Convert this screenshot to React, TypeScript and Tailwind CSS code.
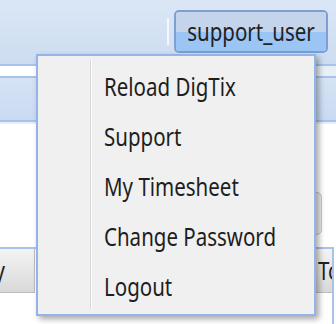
const font = { fontFamily: '"Noto Sans", "Open Sans", sans-serif' };

const items = ["Reload DigTix", "Support", "My Timesheet", "Change Password", "Logout"];

export default function App() {
  return (
    <div className="relative w-[336px] h-[324px] overflow-hidden bg-white" style={font}>
      {/* header */}
      <div className="h-[64px] bg-gradient-to-b from-[#dbe7f6] to-[#cddcf1] flex justify-end items-start pr-[8px]">
        <div className="mt-[18px] h-[27px] w-[2px] bg-[#f3f8ff] mr-[5px]" />
        <button className="mt-[10px] w-[154px] h-[43px] rounded-[5px] border-2 border-[#7f9fd2] overflow-hidden flex flex-col relative">
          <div className="h-1/2 w-full bg-[#c3d4eb]" />
          <div className="h-1/2 w-full bg-[#9bc5f4]" />
          <span className="absolute inset-0 flex items-center justify-center text-[20.5px] text-[#222]">
            <span className="inline-block scale-y-125">support_user</span>
          </span>
        </button>
      </div>
      <div className="h-[2px] bg-[#a8c3ea]" />
      <div className="h-[10px] bg-gradient-to-r from-white via-white to-[#e9eff7]" />
      <div className="h-[2px] bg-[#a8c3ea]" />
      <div className="h-[42px] bg-gradient-to-b from-[#d6e3f5] to-[#c9daf1]" />
      <div className="h-[2px] bg-[#a8c3ea]" />
      <div className="h-[2px] bg-[#e6eef9]" />

      {/* content */}
      <div className="h-[123px] flex justify-end pr-[14px]">
        <div className="mt-[68px] w-[40px] h-[43px] rounded-[5px] border border-[#c9c9c9] bg-[#ececec]" />
      </div>

      {/* bottom panel */}
      <div className="h-[77px] mr-[2px] border-t-2 border-r-2 border-[#a8c3ea]">
        <div className="h-[44px] flex justify-between bg-white">
          <div className="w-[35px] h-full overflow-hidden flex justify-end items-center pr-[29px] bg-gradient-to-b from-[#f4f4f4] to-[#d9d9d9] border-r border-b border-[#bdbdbd] text-[20.5px] text-[#222]">
            <span className="inline-block scale-y-125 whitespace-nowrap">History</span>
          </div>
          <div className="w-[16px] h-full overflow-hidden flex items-center pl-[2px] bg-gradient-to-b from-[#f4f4f4] to-[#d9d9d9] border-b border-[#bdbdbd] text-[20.5px] text-[#222]">
            <span className="inline-block scale-y-125 whitespace-nowrap">Tools</span>
          </div>
        </div>
      </div>

      {/* dropdown menu */}
      <div className="absolute left-[36px] top-[54px] w-[280px] h-[262px] border-2 border-[#93b4e8] bg-[#f0f0f0] shadow-[3px_3px_6px_rgba(0,0,0,0.35)] flex">
        <div className="w-[52px]" />
        <div className="mt-[4px] mb-[5px] w-[2px] border-l border-[#d8d8d8] border-r border-r-white" />
        <ul className="flex-1 pl-[12px] pt-[5px]">
          {items.map(label => (
            <li key={label} className="h-[50px] flex items-center text-[20.5px] text-[#1e1e1e]">
              <span className="inline-block scale-y-125">{label}</span>
            </li>
          ))}
        </ul>
      </div>
    </div>
  );
}
